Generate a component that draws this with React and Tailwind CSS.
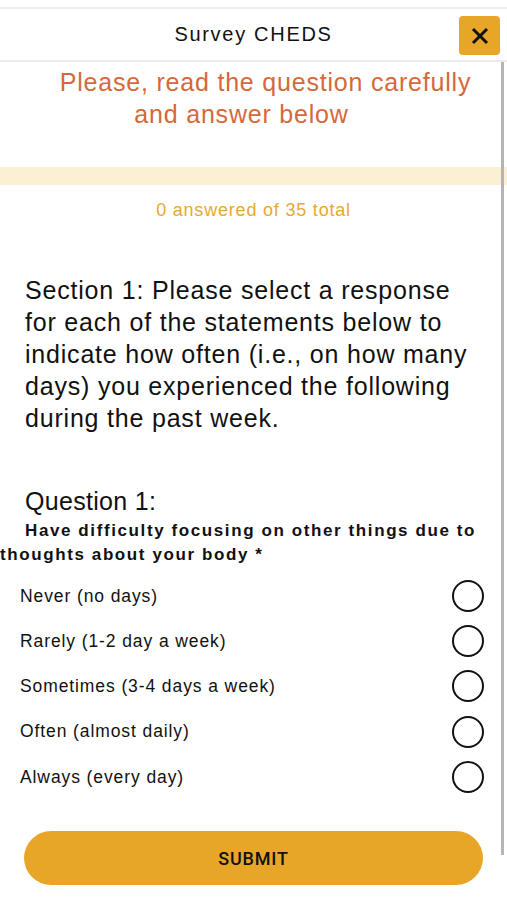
export default function App() {
    const options = [
        "Never (no days)",
        "Rarely (1-2 day a week)",
        "Sometimes (3-4 days a week)",
        "Often (almost daily)",
        "Always (every day)",
    ];

    return (
        <div className="relative w-[507px] h-[900px] bg-white overflow-hidden font-['Liberation_Sans',Arial,sans-serif] text-[#111]">
            <div className="h-[7px]" />
            <div className="h-[2px] bg-[#ececec]" />
            {/* header */}
            <div className="relative h-[53px] flex items-center justify-center border-b-2 border-[#ececec]">
                <p className="text-[20px] tracking-[1.7px] text-[#111] mt-[-1px]">Survey CHEDS</p>
                <button className="absolute right-[7px] top-[7px] w-[41px] h-[39px] rounded-[4px] bg-[#e8a629] flex items-center justify-center">
                    <svg width="18" height="18" viewBox="0 0 18 18">
                        <path d="M2 2L16 16M16 2L2 16" stroke="#111" strokeWidth="3" />
                    </svg>
                </button>
            </div>

            <div className="pt-[4px] text-[25px] leading-[32px] tracking-[0.8px] text-[#d4693b] text-center">
                <span className="block pl-[24px]">Please, read the question carefully</span>
                <span className="block pr-[24px]">and answer below</span>
            </div>

            <div className="mt-[37px] h-[18px] bg-[#fbefd4]" />
            <p className="mt-[13px] text-center text-[18px] leading-[24px] tracking-[0.8px] text-[#e8a830]">0 answered of 35 total</p>

            <p className="mt-[52px] pl-[25px] pr-[20px] text-[25px] leading-[32px] tracking-[0.8px]">
                Section 1: Please select a response for each of the statements below to indicate how often (i.e., on how many days) you experienced the following during the past week.
            </p>

            <p className="mt-[51px] px-[25px] text-[25px] leading-[32px] tracking-[0.3px]">Question 1:</p>
            <p className="mt-[2px] indent-[25px] pr-[20px] text-[17px] leading-[24px] font-bold tracking-[1.6px]">
                Have difficulty focusing on other things due to thoughts about your body *
            </p>

            <div className="mt-[6px] pl-[20px] pr-[23px] flex flex-col">
                {options.map((o) => (
                    <label key={o} className="h-[45.3px] flex items-center justify-between">
                        <span className="text-[17.5px] tracking-[0.9px]">{o}</span>
                        <span className="w-[32px] h-[32px] rounded-full border-[2.5px] border-[#111]" />
                    </label>
                ))}
            </div>

            <div className="mt-[32px] px-[24px]">
                <button className="w-full h-[54px] rounded-full bg-[#e8a629] font-['Roboto',sans-serif] text-[18px] font-medium tracking-[0.8px] text-[#111]">
                    SUBMIT
                </button>
            </div>

            {/* scrollbar */}
            <div className="absolute left-[501px] top-[62px] w-[3px] h-[793px] bg-[#b5b5b5]" />
        </div>
    );
}
